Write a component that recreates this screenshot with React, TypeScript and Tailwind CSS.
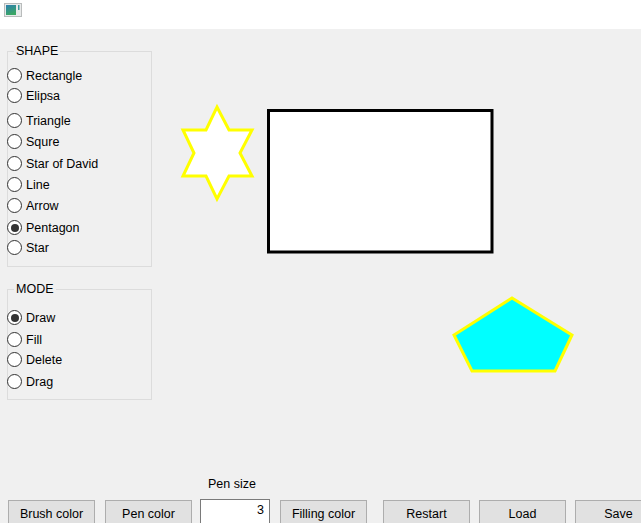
import React from "react";

function Radio({ label, checked, mt }: { label: string; checked?: boolean; mt: string }) {
  return (
    <div className={`flex h-[15px] items-center ${mt}`}>
      <div className="relative -ml-[1px] flex h-[15px] w-[15px] items-center justify-center rounded-full border border-[#333333] bg-white">
        {checked && <div className="h-[8px] w-[8px] rounded-full bg-[#333333]" />}
      </div>
      <span className="ml-[4px] pt-[1px] text-[12.5px] leading-[15px] text-black">{label}</span>
    </div>
  );
}

function Btn({ label, ml }: { label: string; ml: string }) {
  return (
    <div
      className={`${ml} mt-[24px] flex h-[28px] w-[87px] shrink-0 items-center justify-center border border-[#adadad] bg-[#e1e1e1] text-[12.5px] text-black`}
    >
      {label}
    </div>
  );
}

export default function App() {
  return (
    <div
      className="relative flex h-[523px] w-[641px] flex-col overflow-hidden bg-[#f0f0f0]"
      style={{ fontFamily: '"Liberation Sans", Arial, sans-serif' }}
    >
      {/* title bar */}
      <div className="flex h-[29px] shrink-0 items-start bg-white pl-[4px] pt-[3px]">
        <svg width="18" height="14" viewBox="0 0 18 14">
          <defs>
            <linearGradient id="ig" x1="0" y1="0" x2="0.4" y2="1">
              <stop offset="0" stopColor="#2c7fb0" />
              <stop offset="1" stopColor="#3aa664" />
            </linearGradient>
          </defs>
          <rect x="0.5" y="0.5" width="17" height="13" fill="#e8eaea" stroke="#b9bcbc" />
          <rect x="2" y="2" width="10" height="10" fill="url(#ig)" />
          <rect x="14" y="2" width="1.5" height="5" fill="#3a9a9a" />
        </svg>
      </div>

      {/* main */}
      <div className="flex flex-1 flex-col">
        <div className="ml-[7px] mt-[22px] w-[145px]">
          {/* SHAPE */}
          <div className="relative h-[216px] border border-[#dcdcdc] pt-[16px]">
            <span className="absolute -top-[8px] left-[6px] bg-[#f0f0f0] px-[2px] text-[12.5px] leading-[15px] text-black">
              SHAPE
            </span>
            <Radio label="Rectangle" mt="mt-0" />
            <Radio label="Elipsa" mt="mt-[5px]" />
            <Radio label="Triangle" mt="mt-[10px]" />
            <Radio label="Squre" mt="mt-[6px]" />
            <Radio label="Star of David" mt="mt-[7px]" />
            <Radio label="Line" mt="mt-[6px]" />
            <Radio label="Arrow" mt="mt-[6px]" />
            <Radio label="Pentagon" checked mt="mt-[7px]" />
            <Radio label="Star" mt="mt-[5px]" />
          </div>

          {/* MODE */}
          <div className="relative mt-[22px] h-[111px] border border-[#dcdcdc] pt-[20px]">
            <span className="absolute -top-[8px] left-[6px] bg-[#f0f0f0] px-[2px] text-[12.5px] leading-[15px] text-black">
              MODE
            </span>
            <Radio label="Draw" checked mt="mt-0" />
            <Radio label="Fill" mt="mt-[7px]" />
            <Radio label="Delete" mt="mt-[5px]" />
            <Radio label="Drag" mt="mt-[7px]" />
          </div>
        </div>

        {/* bottom bar */}
        <div className="mt-auto flex h-[47px] items-start">
          <Btn label="Brush color" ml="ml-[8px]" />
          <Btn label="Pen color" ml="ml-[10px]" />
          <div className="ml-[8px] flex w-[70px] shrink-0 flex-col items-center pt-[1px]">
            <span className="mr-[6px] text-[12.5px] leading-[15px] text-black">Pen size</span>
            <div className="mt-[7px] flex h-[26px] w-[70px] items-start justify-end border border-[#7a7a7a] bg-white pr-[5px] pt-[3px] text-[12.5px] leading-[15px] text-black">
              3
            </div>
          </div>
          <Btn label="Filling color" ml="ml-[10px]" />
          <Btn label="Restart" ml="ml-[16px]" />
          <Btn label="Load" ml="ml-[9px]" />
          <Btn label="Save" ml="ml-[9px]" />
        </div>
      </div>

      {/* drawing canvas */}
      <svg
        className="pointer-events-none absolute left-0 top-0"
        width="641"
        height="523"
        viewBox="0 0 641 523"
      >
        <polygon
          points="217,107 229,130 252,130 240,153 252,176 229,176 217,199 206,176 183,176 194,153 183,130 206,130"
          fill="#ffffff"
          stroke="#ffff00"
          strokeWidth="3"
        />
        <rect x="268.5" y="110.5" width="223.5" height="141.5" fill="#ffffff" stroke="#000000" strokeWidth="3" />
        <polygon
          points="512,298 572,335 555,371 472,371 454,335"
          fill="#00ffff"
          stroke="#ffff00"
          strokeWidth="3"
        />
      </svg>
    </div>
  );
}
